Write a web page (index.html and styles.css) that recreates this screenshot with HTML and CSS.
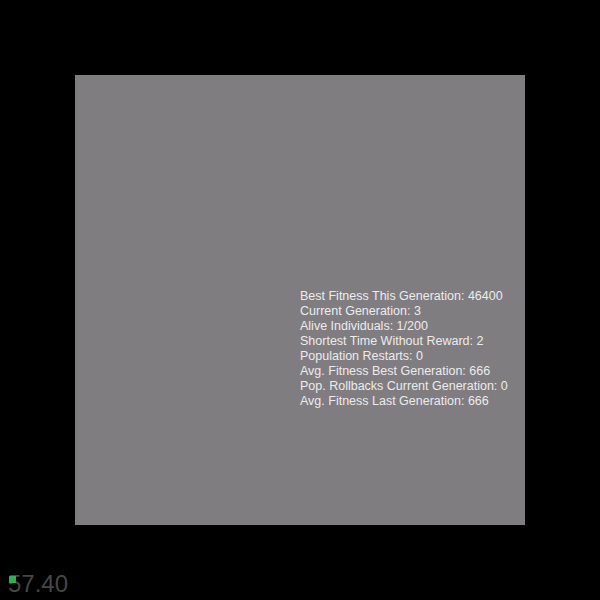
FILE: index.html
```html
<!DOCTYPE html>
<html>
<head>
<meta charset="utf-8">
<link rel="stylesheet" href="styles.css">
</head>
<body>
<div class="page">
  <div class="stage">
    <div class="stats">
      <div>Best Fitness This Generation: 46400</div>
      <div>Current Generation: 3</div>
      <div>Alive Individuals: 1/200</div>
      <div>Shortest Time Without Reward: 2</div>
      <div>Population Restarts: 0</div>
      <div>Avg. Fitness Best Generation: 666</div>
      <div>Pop. Rollbacks Current Generation: 0</div>
      <div>Avg. Fitness Last Generation: 666</div>
    </div>
  </div>
  <div class="fps"><span class="dot"></span>57.40</div>
</div>
</body>
</html>
```
FILE: styles.css
```css
html, body {
  margin: 0;
  padding: 0;
  background: #000;
}
.page {
  width: 600px;
  height: 600px;
  position: relative;
  padding-top: 75px;
  box-sizing: border-box;
}
.stage {
  width: 450px;
  height: 450px;
  margin-left: 75px;
  background: #7f7d80;
  box-sizing: border-box;
  padding-left: 225px;
  padding-top: 214px;
}
.stats {
  font-family: "Liberation Sans", Arial, sans-serif;
  font-size: 12.5px;
  line-height: 15px;
  color: #ececec;
  white-space: nowrap;
}
.fps {
  position: absolute;
  left: 8px;
  top: 570px;
  font-family: "Liberation Sans", Arial, sans-serif;
  font-size: 24px;
  line-height: 28px;
  color: #464646;
}
.dot {
  position: absolute;
  left: 1px;
  top: 6px;
  width: 7px;
  height: 7px;
  background: #2eb34a;
}
```
